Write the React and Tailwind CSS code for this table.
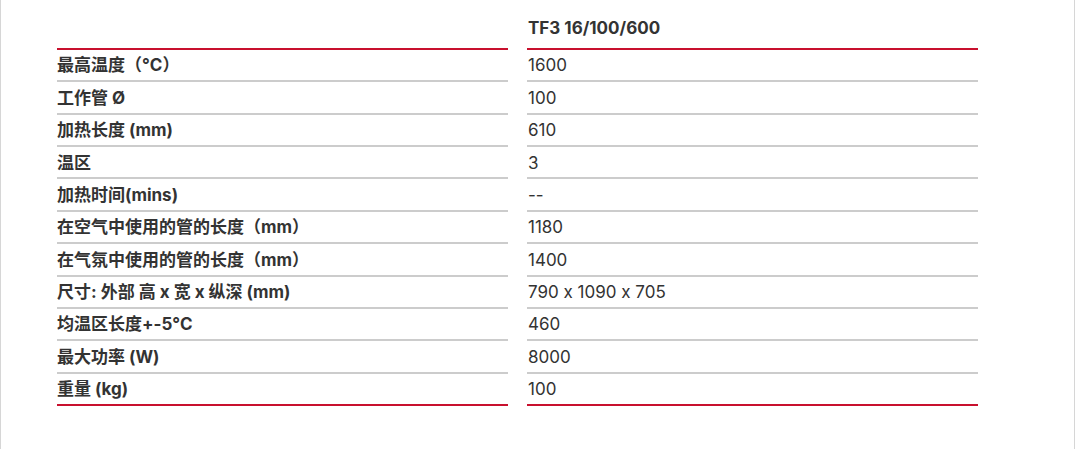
const rows = [
    ['最高温度（°C）', '1600'],
    ['工作管 Ø', '100'],
    ['加热长度 (mm)', '610'],
    ['温区', '3'],
    ['加热时间(mins)', '--'],
    ['在空气中使用的管的长度（mm）', '1180'],
    ['在气氛中使用的管的长度（mm）', '1400'],
    ['尺寸: 外部 高 x 宽 x 纵深 (mm)', '790 x 1090 x 705'],
    ['均温区长度+-5°C', '460'],
    ['最大功率 (W)', '8000'],
    ['重量 (kg)', '100'],
];

export default function App() {
    return (
        <div
            className="w-[1075px] h-[449px] bg-white border-l border-r border-[#d6d6d6] text-[#333333] [font-feature-settings:'calt'_0]"
            style={{ fontFamily: "Inter, 'Noto Sans CJK SC', sans-serif" }}
        >
            <div className="ml-[56px] grid grid-cols-[451px_451px] gap-x-[19px]">
                <div className="h-[50px] border-b-2 border-[#c8102e]" />
                <div className="h-[50px] border-b-2 border-[#c8102e] flex items-end pb-[7px] pl-px text-[17px] font-bold">
                    TF3 16/100/600
                </div>
                {rows.map(([label, value], i) => {
                    const last = i === rows.length - 1;
                    const line = last ? 'border-[#c8102e]' : 'border-[#cccccc]';
                    return [
                        <div key={`l${i}`} className={`h-[32.36px] border-b-2 ${line} flex items-center pt-[2px] text-[17px] font-bold`}>
                            {label}
                        </div>,
                        <div key={`v${i}`} className={`h-[32.36px] border-b-2 ${line} flex items-center pt-[2px] pl-px text-[17px]`}>
                            {value}
                        </div>,
                    ];
                })}
            </div>
        </div>
    );
}
